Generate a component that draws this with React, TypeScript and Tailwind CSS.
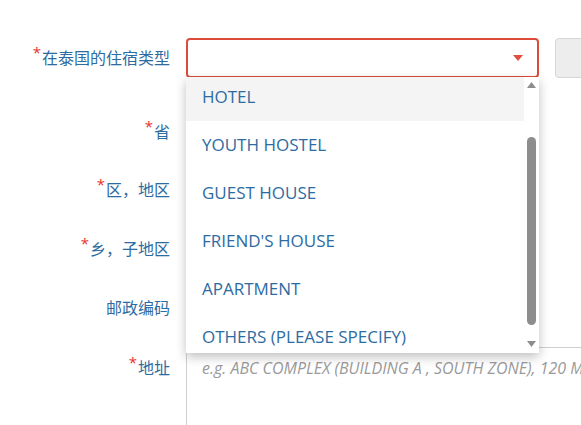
import React from "react";

const labelFont = { fontFamily: '"Open Sans", "Noto Sans CJK SC", sans-serif' };

function Label({ text, req }: { text: string; req?: boolean }) {
  return (
    <div className="w-[170px] shrink-0 text-right text-[16px] leading-none text-[#2d6ca2]" style={labelFont}>
      {req && <span className="relative top-[-6px] mr-[1px] text-[15px] text-[#e8322b]">*</span>}
      {text}
    </div>
  );
}

const items = ["HOTEL", "YOUTH HOSTEL", "GUEST HOUSE", "FRIEND'S HOUSE", "APARTMENT", "OTHERS (PLEASE SPECIFY)"];

export default function App() {
  return (
    <div className="relative h-[425px] w-[581px] overflow-hidden bg-white" style={labelFont}>
      <div className="flex flex-col pt-[38px]">
        <div className="flex h-[40px] items-center">
          <Label text="在泰国的住宿类型" req />
          <div className="ml-[16px] flex h-[40px] w-[353px] shrink-0 items-center justify-end rounded-[4px] border-2 border-[#dd4b39] pr-[14px]">
            <svg width="10" height="6" viewBox="0 0 10 6"><path d="M0 0 L10 0 L5 6 Z" fill="#e0503e" /></svg>
          </div>
          <div className="ml-[16px] h-[40px] w-[60px] shrink-0 rounded-[4px] border border-[#d6d6d6] bg-[#ededed]" />
        </div>
        <div className="mt-[34px] flex h-[40px] items-center"><Label text="省" req /></div>
        <div className="mt-[18px] flex h-[40px] items-center"><Label text="区，地区" req /></div>
        <div className="mt-[19px] flex h-[40px] items-center"><Label text="乡，子地区" req /></div>
        <div className="mt-[19px] flex h-[40px] items-center"><Label text="邮政编码" /></div>
        <div className="mt-[19px] flex h-[80px] items-start">
          <div className="pt-[13px]"><Label text="地址" req /></div>
          <div className="ml-[16px] h-[100px] flex-1 rounded-tl-[4px] border-l border-t border-[#cfcfcf] pl-[15px] pt-[9px] text-[16px] leading-[22px] italic text-[#9a9a9a] whitespace-nowrap">
            e.g. ABC COMPLEX (BUILDING A , SOUTH ZONE), 120 MOO 3
          </div>
        </div>
      </div>

      <div className="absolute left-[186px] top-[77px] h-[276px] w-[353px] overflow-hidden bg-white shadow-[0_4px_10px_rgba(0,0,0,0.25)]">
        <div className="mr-[15px] flex flex-col">
          {items.map((it, i) => (
            <div
              key={it}
              className={
                (i === 0 ? "h-[44px] bg-[#f4f4f4] pt-[8px] " : "h-[48px] pt-[12px] ") +
                "pl-[16px] text-[17px] leading-[24px] text-[#2d6ca2]"
              }
            >
              {it}
            </div>
          ))}
        </div>
        <div className="absolute right-0 top-0 h-full w-[15px]">
          <svg className="absolute left-[3px] top-[5px]" width="9" height="6" viewBox="0 0 9 6"><path d="M0 6 L9 6 L4.5 0 Z" fill="#8d8d8d" /></svg>
          <div className="absolute left-[3px] top-[60px] h-[188px] w-[9px] rounded-full bg-[#8d8d8d]" />
          <svg className="absolute bottom-[6px] left-[3px]" width="9" height="6" viewBox="0 0 9 6"><path d="M0 0 L9 0 L4.5 6 Z" fill="#8d8d8d" /></svg>
        </div>
      </div>
    </div>
  );
}
